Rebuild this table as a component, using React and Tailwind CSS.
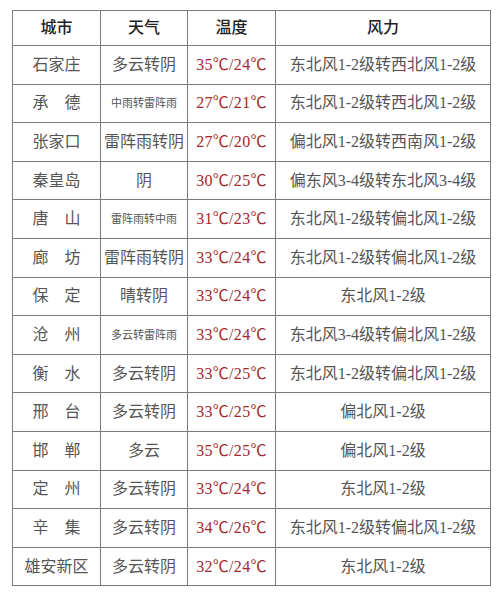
import React from "react";

const rows = [
  ["石家庄", "多云转阴", "35℃/24℃", "东北风1-2级转西北风1-2级"],
  ["承　德", "中雨转雷阵雨", "27℃/21℃", "东北风1-2级转西北风1-2级"],
  ["张家口", "雷阵雨转阴", "27℃/20℃", "偏北风1-2级转西南风1-2级"],
  ["秦皇岛", "阴", "30℃/25℃", "偏东风3-4级转东北风3-4级"],
  ["唐　山", "雷阵雨转中雨", "31℃/23℃", "东北风1-2级转偏北风1-2级"],
  ["廊　坊", "雷阵雨转阴", "33℃/24℃", "东北风1-2级转偏北风1-2级"],
  ["保　定", "晴转阴", "33℃/24℃", "东北风1-2级"],
  ["沧　州", "多云转雷阵雨", "33℃/24℃", "东北风3-4级转偏北风1-2级"],
  ["衡　水", "多云转阴", "33℃/25℃", "东北风1-2级转偏北风1-2级"],
  ["邢　台", "多云转阴", "33℃/25℃", "偏北风1-2级"],
  ["邯　郸", "多云", "35℃/25℃", "偏北风1-2级"],
  ["定　州", "多云转阴", "33℃/24℃", "东北风1-2级"],
  ["辛　集", "多云转阴", "34℃/26℃", "东北风1-2级转偏北风1-2级"],
  ["雄安新区", "多云转阴", "32℃/24℃", "东北风1-2级"],
];

// weather strings with six characters are set smaller in the original
const small = (w) => w.length >= 6;

export default function App() {
  return (
    <div className="w-[500px] h-[610px] bg-white pt-[10px] pl-[12px] font-['Liberation_Serif','Noto_Sans_CJK_SC',serif]">
      <table className="w-[478px] border-collapse table-fixed text-center">
        <colgroup>
          <col className="w-[88px]" />
          <col className="w-[87px]" />
          <col className="w-[88px]" />
          <col className="w-[215px]" />
        </colgroup>
        <thead>
          <tr className="h-[35px] text-[#222] text-[16px]">
            <th className="border border-[#7a7a7a] font-medium">城市</th>
            <th className="border border-[#7a7a7a] font-medium">天气</th>
            <th className="border border-[#7a7a7a] font-medium">温度</th>
            <th className="border border-[#7a7a7a] font-medium">风力</th>
          </tr>
        </thead>
        <tbody>
          {rows.map(([city, weather, temp, wind]) => (
            <tr key={city} className="h-[38.6px] text-[#555] text-[16px]">
              <td className="border border-[#7a7a7a] p-0">{city}</td>
              <td
                className={
                  small(weather)
                    ? "border border-[#7a7a7a] p-0 text-[11px]"
                    : "border border-[#7a7a7a] p-0"
                }
              >
                {weather}
              </td>
              <td className="border border-[#7a7a7a] p-0 text-[#a3282c] tracking-[0.3px]">{temp}</td>
              <td className="border border-[#7a7a7a] p-0">{wind}</td>
            </tr>
          ))}
        </tbody>
      </table>
    </div>
  );
}
